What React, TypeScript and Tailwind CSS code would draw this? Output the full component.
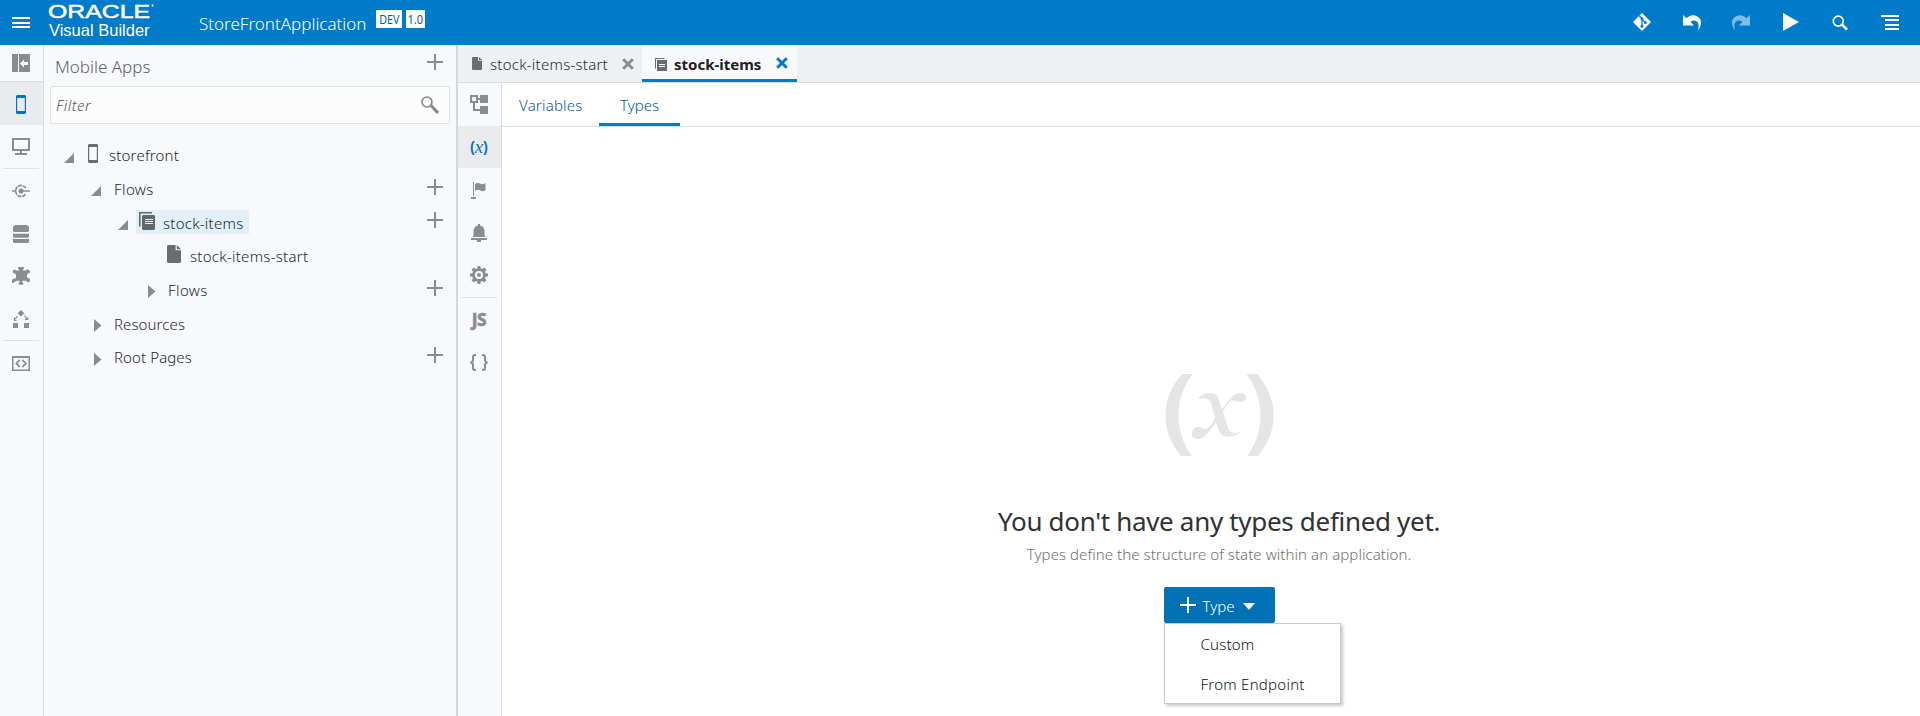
import React from "react";

type SvgProps = { className?: string; children: React.ReactNode; w: number; h: number; crisp?: boolean };

function Svg({ className = "", children, w, h, crisp }: SvgProps) {
  return (
    <svg
      width={w}
      height={h}
      viewBox={`0 0 ${w} ${h}`}
      fill="currentColor"
      shapeRendering={crisp ? "crispEdges" : "auto"}
      className={`shrink-0 ${className}`}
    >
      {children}
    </svg>
  );
}

const Plus = ({ className = "text-[#8a8c8e]" }: { className?: string }) => (
  <Svg w={16} h={16} crisp className={className}>
    <path d="M7 0h2v7h7v2H9v7H7V9H0V7h7z" />
  </Svg>
);

const Phone = ({ className = "" }: { className?: string }) => (
  <Svg w={10} h={19} className={className}>
    <path fillRule="evenodd" d="M1 0h8l1 1v17l-1 1H1l-1-1V1zM1.2 3v13h7.6V3z" />
  </Svg>
);

const Doc = ({ className = "", w = 14, h = 18 }: { className?: string; w?: number; h?: number }) => (
  <svg width={w} height={h} viewBox="0 0 14 18" preserveAspectRatio="none" fill="currentColor" className={`shrink-0 ${className}`}>
    <path d="M1 0h7.6v5.2H14V17l-1 1H1l-1-1V1zM9.8 0 14 4.2H9.8z" />
  </svg>
);

const FlowDocs = ({ className = "" }: { className?: string }) => (
  <Svg w={16} h={18} className={className}>
    <path d="M.8 14.5V.8H13" fill="none" stroke="currentColor" strokeWidth="1.6" />
    <path d="M4 3h11l1 1v13l-1 1H4l-1-1V4z" />
    <path d="M6 7.500h8M6 9.500h8M6 11.500h8" stroke="#e4f0f8" strokeWidth="1" />
  </Svg>
);

const TabFlow = () => (
  <Svg w={12} h={13} className="text-[#6a6d70]">
    <path d="M.5 10.5V.5h9" fill="none" stroke="currentColor" />
    <path d="M2 2h10v11H2z" />
    <path d="M4 6.5h6M4 8.5h6" stroke="#fff" />
  </Svg>
);

const Close = ({ className = "" }: { className?: string }) => (
  <Svg w={12} h={12} className={className}>
    <path d="M1.2 1.2l9.6 9.6M10.8 1.2l-9.6 9.6" stroke="currentColor" strokeWidth="3" />
  </Svg>
);

const Expanded = () => (
  <Svg w={10} h={10} className="mt-[4px] text-[#8a8d90]">
    <path d="M10 0v10H0z" />
  </Svg>
);

const Collapsed = () => (
  <Svg w={8} h={13} className="mt-[3px] text-[#8a8d90]">
    <path d="M0 0l7.5 6.5L0 13z" />
  </Svg>
);

function RailCell({ children, className }: { children?: React.ReactNode; className: string }) {
  return <div className={`flex w-full shrink-0 items-center justify-center pr-px ${className}`}>{children}</div>;
}

const Divider = () => <div className="ml-[3px] h-px w-9 shrink-0 bg-[#dfe1e3]" />;

function TreeRow({
  indent,
  open,
  icon,
  label,
  labelClass,
  plus,
}: {
  indent: string;
  open?: boolean;
  icon?: React.ReactNode;
  label: string;
  labelClass: string;
  plus?: boolean;
}) {
  return (
    <div className={`flex h-[33.67px] items-center pr-[13px] ${indent}`}>
      {open === true && <Expanded />}
      {open === false && <Collapsed />}
      {icon}
      <span className={`whitespace-nowrap text-[#26282b] ${labelClass}`}>{label}</span>
      {plus && (
        <span className="-mt-[5px] ml-auto">
          <Plus />
        </span>
      )}
    </div>
  );
}

function Header() {
  return (
    <header className="flex h-[45px] shrink-0 items-start bg-[#007bc9] text-white">
      <Svg w={18} h={11} crisp className="mt-[17px] ml-3">
        <path d="M0 0h18v2H0zM0 4.5h18v2H0zM0 9h18v2H0z" />
      </Svg>
      <div className="ml-[18px] w-[108px] font-['Liberation_Sans']">
        <div className="mt-[2px] flex h-[18px] items-start">
          <span className="block w-[76px] origin-left scale-x-[1.38] text-[18px] leading-[20px] [-webkit-text-stroke:0.5px_white]">ORACLE</span>
          <Svg w={3} h={3} className="mt-[2px] ml-[27px]">
            <circle cx="1.500" cy="1.500" r="1" />
          </Svg>
        </div>
        <div className="pl-px text-[16.5px] leading-[20px] whitespace-nowrap">Visual Builder</div>
      </div>
      <span className="mt-[13px] ml-[43px] w-[168px] text-[17px] leading-[22px] font-[350] whitespace-nowrap">StoreFrontApplication</span>
      <span className="mt-[10px] ml-[9px] flex h-[18px] w-[26px] items-center justify-center bg-white text-[#005b9f]">
        <span className="scale-x-[0.82] text-[13px] leading-none">DEV</span>
      </span>
      <span className="mt-[10px] ml-1 flex h-[18px] w-[19px] items-center justify-center bg-white text-[#005b9f]">
        <span className="scale-x-[0.85] text-[13px] leading-none">1.0</span>
      </span>

      <div className="mt-[13px] ml-auto flex items-start pr-[21px]">
        <Svg w={18} h={18} className="mr-8">
          <path d="M9 0l9 9-9 9-9-9z" />
          <path d="M6.2 2.8L9 5.6v7.6M9 6.4l3.4 3.2" stroke="#007bc9" strokeWidth="1.3" fill="none" />
          <circle cx="9" cy="5.8" r="1.5" fill="#007bc9" />
          <circle cx="12.4" cy="9.4" r="1.5" fill="#007bc9" />
          <circle cx="9" cy="13.2" r="1.5" fill="#007bc9" />
        </Svg>
        <Svg w={18} h={16} className="mt-[2px] mr-[31px]">
          <path d="M0 0l3.600 3.200C6 .4 9 -.3 12 .4c4.500 1 6.800 5 5.800 9.200-.4 2.200-1.200 4-3 5.900.8-2.500 1.200-5 .4-7.100C14.200 5.600 11 4.300 7.400 6.700L11 10.500H0z" />
        </Svg>
        <Svg w={18} h={16} className="mt-[2px] mr-[33px] text-[#7fbde4]">
          <path d="M18 0l-3.600 3.200C12 .4 9-.3 6 .4 1.500 1.400-.8 5.400.2 9.600c.4 2.200 1.200 4 3 5.900-.8-2.500-1.200-5-.4-7.100C3.800 5.600 7 4.300 10.600 6.700L7 10.500h11z" />
        </Svg>
        <Svg w={16} h={18} className="mr-[33px]">
          <path d="M0 0l16 9-16 9z" />
        </Svg>
        <Svg w={16} h={16} className="mt-[2px] mr-[33px]">
          <circle cx="6.300" cy="6.100" r="5" fill="none" stroke="currentColor" strokeWidth="1.700" />
          <path d="M10 9.600l5 5" stroke="currentColor" strokeWidth="2.700" />
        </Svg>
        <Svg w={18} h={16} crisp className="mt-[2px]">
          <path d="M0 0h18v2H0zM4 4h14v2H4zM4 9h14v2H4zM4 13h14v2H4z" />
        </Svg>
      </div>
    </header>
  );
}

function LeftRail() {
  return (
    <nav className="flex w-11 shrink-0 flex-col border-r border-[#d5dfe5] text-[#8a8d90]">
      <RailCell className="h-9">
        <Svg w={18} h={18} crisp>
          <path d="M0 0h6v18H0zM7 0h11v18H7z" />
          <path d="M8 9l4-4v2.500h3.500v3.500H12v2.500z" fill="#f8f9fc" />
        </Svg>
      </RailCell>
      <RailCell className="h-11 border-t border-[#d5dfe5] bg-[#e9ebed]">
        <Phone className="mt-px text-[#0572ce]" />
      </RailCell>
      <RailCell className="h-[43px]">
        <Svg w={18} h={17} crisp>
          <path fillRule="evenodd" d="M0 0h18v13H0zM2 2v9h14V2z" />
          <path d="M8 13h2v2h5v2H3v-2h5z" />
        </Svg>
      </RailCell>
      <Divider />
      <RailCell className="h-[43px]">
        <Svg w={18} h={14}>
          <circle cx="9" cy="7" r="2.500" />
          <path d="M0 7h4M9 7h9" stroke="currentColor" strokeWidth="1.300" />
          <path d="M13.800 4.200A5.400 5.400 0 0 0 3.700 7a5.400 5.400 0 0 0 10.100 2.800" fill="none" stroke="currentColor" strokeWidth="1.700" strokeDasharray="4 .7" />
        </Svg>
      </RailCell>
      <RailCell className="h-11">
        <Svg w={16} h={18}>
          <path d="M1 1l1-1h12l1 1 1 1v4l-1 1H1L0 6V2zM0 8.700h16v3l-1 1H1l-1-1zM0 14h16v3l-1 1H1l-1-1z" />
        </Svg>
      </RailCell>
      <RailCell className="h-[41px]">
        <Svg w={18} h={18} className="-mt-[2px]">
          <path d="M6.500 0h5l.7 1.200L11 2.500v1h2.500l2-1.200 1.500.7 1 1.500-.5 1.500-2 .8-.5 1v2l.7 1.200 2 .5.300 2-1 1.500-1.500.3-1.500-1.500H10.500v2l1.200.8-.7 1.200H7l-.7-1.200 1.200-.8v-2H5l-2 .8-1.300 1.100H0v-3l1.500-1 2-.3.5-1.200V7.500L2.500 6.500.8 5.500 1 3.500 2.500 2.500l2 1H7v-1L5.800 1.200z" />
        </Svg>
      </RailCell>
      <RailCell className="h-[43px]">
        <Svg w={16} h={18}>
          <path d="M8 0l3.300 3.300L8 6.600 4.700 3.300zM0 13h5v5H0zM11 13h5v5h-5z" />
          <path d="M4.500 6L2.300 9M11.500 5.500L14 9M1.500 7.800v2.700h2M12 9.500h2.700V7.200" stroke="currentColor" strokeWidth="1.200" fill="none" />
        </Svg>
      </RailCell>
      <Divider />
      <RailCell className="h-[44px]">
        <Svg w={18} h={15}>
          <path fillRule="evenodd" d="M0 0h18v15H0zM1.500 2v11.500h15V2z" />
          <path d="M7.700 3.800L4.300 7.500l3.400 3.700M10.300 3.800l3.400 3.700-3.400 3.700" fill="none" stroke="currentColor" strokeWidth="1.700" />
        </Svg>
      </RailCell>
    </nav>
  );
}

function Sidebar() {
  return (
    <aside className="flex w-[414px] shrink-0 flex-col border-r-2 border-[#d5d7d9]">
      <div className="flex h-[41px] items-start pt-[9px] pr-[13px] pl-[11px]">
        <span className="mt-[2px] text-[17px] leading-[22px] font-[350] text-[#5f6366]">Mobile Apps</span>
        <span className="ml-auto">
          <Plus />
        </span>
      </div>
      <div className="ml-[6px] flex h-[38px] w-[400px] items-center rounded-[2px] border border-[#dfe2e4] bg-[#fcfcfd] pr-[10px] pl-[5px]">
        <span className="text-[15px] leading-none font-[350] tracking-[0.5px] text-[#55585b] italic">Filter</span>
        <Svg w={18} h={18} className="ml-auto text-[#85888b]">
          <circle cx="6" cy="6" r="5" fill="none" stroke="currentColor" strokeWidth="1.600" />
          <path d="M10 9.500l7 7.500" stroke="currentColor" strokeWidth="3" />
        </Svg>
      </div>
      <div className="mt-[15px] flex flex-col text-[15px] leading-none font-[350]">
        <TreeRow indent="pl-5" open icon={<Phone className="-mt-[5px] mr-[11px] ml-[14px] text-[#6a6d70]" />} label="storefront" labelClass="tracking-[0.2px]" />
        <TreeRow indent="pl-[47px]" open label="Flows" labelClass="ml-[13px] tracking-[0.4px]" plus />
        <div className="flex h-[33.67px] items-center pr-[13px] pl-[74px]">
          <Expanded />
          <span className="-mt-[2px] ml-2 flex h-6 w-[113px] items-center bg-[#e0eff8] pl-[3px]">
            <FlowDocs className="-mt-[2px] text-[#63676a]" />
            <span className="mt-[2px] ml-2 tracking-[0.25px] whitespace-nowrap text-[#26282b]">stock-items</span>
          </span>
          <span className="-mt-[6px] ml-auto">
            <Plus />
          </span>
        </div>
        <TreeRow indent="pl-[123px]" icon={<Doc className="-mt-[5px] mr-[9px] text-[#6a6d70]" />} label="stock-items-start" labelClass="tracking-[0.27px]" />
        <TreeRow indent="pl-[104px]" open={false} label="Flows" labelClass="ml-3 tracking-[0.4px]" plus />
        <TreeRow indent="pl-[50px]" open={false} label="Resources" labelClass="ml-3 tracking-[0.1px]" />
        <TreeRow indent="pl-[50px]" open={false} label="Root Pages" labelClass="ml-3 tracking-[0.1px]" plus />
      </div>
    </aside>
  );
}

function EditorRail() {
  return (
    <nav className="flex w-11 shrink-0 flex-col border-r border-[#d5dfe5] bg-[#f8f9fc] text-[#8a8d90]">
      <RailCell className="h-[43px]">
        <Svg w={18} h={19} crisp>
          <path fillRule="evenodd" d="M0 0h8v3h2V0h8v8h-8V5H8v3H5v6h5v-3h8v8h-8v-3H3V8H0zM2 2v4h4V2z" />
        </Svg>
      </RailCell>
      <RailCell className="h-[42px] bg-[#e9ebed]">
        <span className="flex items-center text-[#0572ce]">
          <span className="font-['Liberation_Sans'] text-[14px] leading-none font-bold">(</span>
          <span className="-mt-[2px] font-['Liberation_Serif'] text-[19px] leading-none italic">x</span>
          <span className="font-['Liberation_Sans'] text-[14px] leading-none font-bold">)</span>
        </span>
      </RailCell>
      <RailCell className="h-11">
        <Svg w={16} h={17} className="mr-[1px]">
          <path d="M2 0h1v14H2zM0 15h5v2H0zM4 2c2-1.500 4-1.300 5.500-.2 1.500.9 3 .6 5-.8v7c-2 1.500-3.700 1.500-5.200.5C7.500 7.300 6 7.500 4 9z" />
        </Svg>
      </RailCell>
      <RailCell className="h-[42px]">
        <Svg w={16} h={18}>
          <path d="M7 0h2v1.500c3 .7 4.500 2.500 4.500 5.500v4l1 2H1.500l1-2V7c0-3 1.500-4.800 4.500-5.500zM0 14h16v2H10v2H6v-2H0z" />
        </Svg>
      </RailCell>
      <RailCell className="h-[43px]">
        <Svg w={18} h={18} className="-mt-px">
          <path fillRule="evenodd" d="M7.500 0h3v2.200l2 .8L14.200 1.500l2.300 2.300L15 5.500l.8 2H18v3h-2.200l-.8 2 1.500 1.700-2.300 2.300-1.700-1.500-2 .8V18h-3v-2.200l-2-.8-1.700 1.500-2.300-2.300L3 12.500l-.8-2H0v-3h2.200l.8-2-1.500-1.700 2.300-2.300L5.500 3l2-.8zM9 5a4 4 0 1 0 0 8 4 4 0 0 0 0-8z" />
          <circle cx="9" cy="9" r="2" />
        </Svg>
      </RailCell>
      <Divider />
      <RailCell className="h-[43px]">
        <span className="text-[17px] leading-none font-extrabold tracking-[-0.5px] [-webkit-text-stroke:0.4px_#8a8d90]">JS</span>
      </RailCell>
      <RailCell className="h-[42px]">
        <Svg w={18} h={17}>
          <path d="M6 1H5Q3 1 3 3v3q0 2-2.500 2.500Q3 9 3 11v3q0 2 2 2h1M12 1h1q2 0 2 2v3q0 2 2.500 2.500Q15 9 15 11v3q0 2-2 2h-1" fill="none" stroke="currentColor" strokeWidth="2" />
        </Svg>
      </RailCell>
    </nav>
  );
}

function EmptyState() {
  return (
    <section className="flex flex-1 flex-col items-center pt-[247px] pl-4">
      <Svg w={109} h={82} className="text-[#e4e6e6]">
        <path d="M17 0h10.500C9 25 9 57 26.500 82H16C-5 57-5 25 17 0zM81.500 0H92c22 25 22 57 1 82H82.500C100 57 100 25 81.500 0z" />
        <path d="M33 24.500C38 18 50 17 53 23l4 12.500c6-9 11.500-16 18-16.500 8-.6 8 9 1 9-3 0-6-1.500-9-1.500-3 1-6.500 6.500-9 11.500l5 16c2 5 5 6.500 13 3.500-3 4-8 5.500-14 5-6 0-8-5-9-8.500L51 48c-4 6-8.500 12-13 15.500-7 4-12 0-11-5 1-5 6-7 11-4 3 .6 4 .5 6-1.500 3-3 5-6.500 6-9.500L46 29c-2-5-8-6.500-13-3.500z" />
      </Svg>
      <h1 className="mt-[43px] text-[26px] leading-[44px] tracking-[-0.32px] whitespace-nowrap text-[#303234]">You don't have any types defined yet.</h1>
      <p className="text-[15px] leading-[22px] font-[350] tracking-[0.07px] whitespace-nowrap text-[#6d7073]">Types define the structure of state within an application.</p>
      <div className="relative mt-[22px] text-[15px] font-[350]">
        <button className="flex h-9 w-[111px] items-center rounded-[2px] bg-[#0070b7] pl-4 text-white">
          <Plus className="text-white" />
          <span className="mt-[3px] ml-[7px] leading-none">Type</span>
          <Svg w={12} h={7} className="mt-[3px] ml-[9px]">
            <path d="M0 0h12L6 7z" />
          </Svg>
        </button>
        <div className="absolute top-9 left-0 flex h-[81px] w-[177px] flex-col border border-[#c8cacb] bg-white text-[#111] shadow-[2px_2px_3px_rgba(0,0,0,0.22)]">
          <div className="flex h-10 items-center pt-[2px] pl-9 leading-none tracking-[0.2px]">Custom</div>
          <div className="flex h-10 items-center pt-[3px] pl-9 leading-none tracking-[0.25px]">From Endpoint</div>
        </div>
      </div>
    </section>
  );
}

export default function App() {
  return (
    <div className="flex h-[716px] w-[1920px] flex-col overflow-hidden bg-[#f8f9fc] font-['Noto_Sans','Open_Sans',sans-serif]">
      <Header />
      <div className="flex min-h-0 flex-1">
        <LeftRail />
        <Sidebar />
        <main className="flex min-w-0 flex-1 flex-col bg-white">
          <div className="flex h-[38px] shrink-0 border-b border-[#d5dfe5] bg-[#eff0f2] text-[15px] leading-none">
            <div className="flex w-[184px] items-center pl-[14px]">
              <Doc w={10} h={13} className="text-[#6a6d70]" />
              <span className="mt-[2px] ml-2 w-[119px] font-[350] tracking-[0.25px] whitespace-nowrap text-[#26282b]">stock-items-start</span>
              <Close className="ml-[13px] text-[#8a8d90]" />
            </div>
            <div className="flex w-[155px] items-center border-b-[3px] border-[#007bc9] bg-[#f8f9fc] pl-[13px]">
              <span className="mt-[4px]">
                <TabFlow />
              </span>
              <span className="mt-[5px] ml-[7px] w-[89px] font-bold whitespace-nowrap text-[#1f2123]">stock-items</span>
              <Close className="mt-[2px] ml-[13px] text-[#007bc9]" />
            </div>
          </div>
          <div className="flex min-h-0 flex-1">
            <EditorRail />
            <div className="flex min-w-0 flex-1 flex-col">
              <div className="flex h-11 shrink-0 border-b border-[#d5dfe5] text-[15px] leading-none font-[350] text-[#005b9f]">
                <div className="flex w-[97px] items-center pt-[2px] pl-[17px] tracking-[0.2px]">Variables</div>
                <div className="flex w-[81px] items-center justify-center border-b-[3px] border-[#007bc9] pt-[5px]">Types</div>
              </div>
              <EmptyState />
            </div>
          </div>
        </main>
      </div>
    </div>
  );
}
